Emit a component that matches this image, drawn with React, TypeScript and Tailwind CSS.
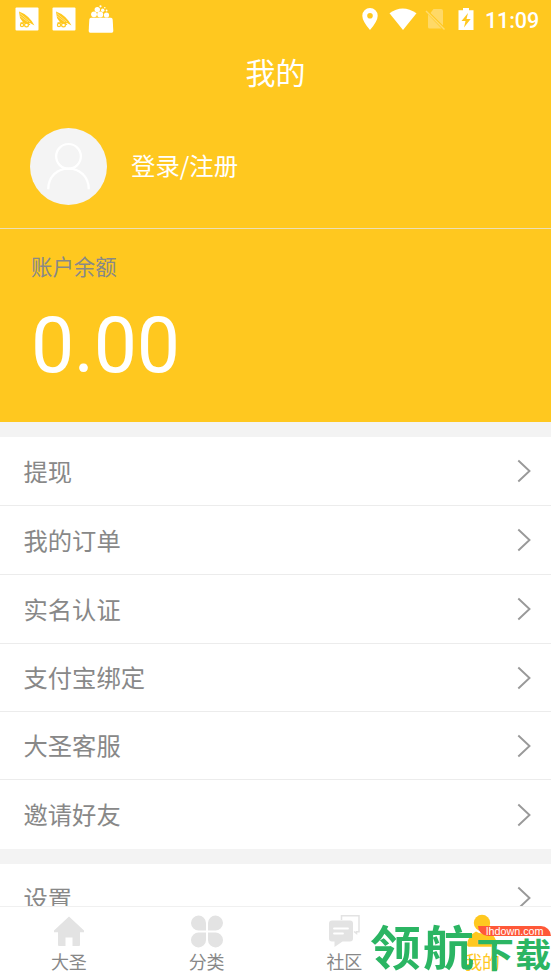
import type { ReactNode } from 'react';

type Tab = {
  name: string;
  icon: ReactNode;
  active?: boolean;
};

const menu = ['提现', '我的订单', '实名认证', '支付宝绑定', '大圣客服', '邀请好友'];

const tabs: Tab[] = [
  {
    name: '大圣',
    icon: (
      <svg width="32" height="34" viewBox="0 0 32 34" fill="#e3e3e3">
        <path d="M16 2.5 31 16.5v1.7h-4V31q0 1-1 1h-6.500v-8.500h-7V32H6q-1 0-1-1V18.200H1v-1.700z" />
      </svg>
    ),
  },
  {
    name: '分类',
    icon: (
      <svg width="32" height="34" viewBox="0 0 32 34" fill="#e3e3e3">
        <path d="M15 16.500H8A7.500 7.500 0 1 1 15 9zM17 16.500V9a7.500 7.500 0 1 1 7 7.500zM15 18.500V26a7.500 7.500 0 1 1-7-7.500zM17 18.500h7a7.500 7.500 0 1 1-7 7.500z" />
      </svg>
    ),
  },
  {
    name: '社区',
    icon: (
      <svg width="32" height="34" viewBox="0 0 32 34" fill="none">
        <path d="M13.500 6V1.800h17.500v16h-2.500v1.700l-2.500-2" stroke="#e3e3e3" strokeWidth="1.500" />
        <path d="M4 6.500h18q3 0 3 3v15q0 3-3 3h-7.500L6.500 33v-5.500H4q-3 0-3-3v-15q0-3 3-3z" fill="#e3e3e3" />
        <path d="M6 14.500h14M6 19.500h9" stroke="#fff" strokeWidth="1.800" strokeLinecap="round" />
      </svg>
    ),
  },
  {
    name: '我的',
    active: true,
    icon: (
      <svg width="32" height="34" viewBox="0 0 32 34" fill="#ffc81f">
        <circle cx="16" cy="9" r="8.200" />
        <path d="M10 17.500q6 4 12 0 8.500 4.500 9 13.500 0 1.800-2 1.800H3q-2 0-2-1.800.500-9 9-13.500z" />
      </svg>
    ),
  },
];

function AppBadge() {
  return (
    <svg width="24" height="24" viewBox="0 0 24 24">
      <rect x=".5" y=".5" width="23" height="23" rx="1" fill="#fff" />
      <path d="M4 4.500Q14 8 19.500 18.500L15 16H8.500L5 11z" fill="#ffc81f" />
      <path d="m5 9 8 6M5 6.500 15 15" stroke="#fff" strokeWidth=".4" />
      <g fill="none" stroke="#ffc81f" strokeWidth="1.200">
        <circle cx="7" cy="18" r="1.600" />
        <circle cx="11.500" cy="18" r="1.900" />
        <path d="M5.500 15.800h7l2.500 2" />
      </g>
    </svg>
  );
}

function StatusBar() {
  return (
    <div className="flex h-10 items-start justify-between pl-[15px] pr-[11px] text-white">
      <div className="flex pt-[7px]">
        <AppBadge />
        <div className="w-[13px]" />
        <AppBadge />
        <svg className="-mt-[2px] ml-[12px]" width="26" height="28" viewBox="0 0 26 28" fill="#fff">
          <path d="M3 12.800h20q1.500 0 1.700 2l.6 11.200q0 1.700-1.500 1.700H2.200q-1.500 0-1.500-1.700l.6-11.200q.2-2 1.700-2z" />
          <circle cx="6" cy="9.300" r="2.900" />
          <circle cx="12.200" cy="9.500" r="3" />
          <circle cx="18.500" cy="10" r="2.600" />
          <circle cx="9.300" cy="4.600" r="2.700" />
          <circle cx="14.700" cy="5.200" r="1.700" />
          <circle cx="12.500" cy="1.300" r="1.100" />
          <circle cx="16.800" cy="2.800" r=".8" />
          <circle cx="18.600" cy="5.500" r=".9" />
        </svg>
      </div>
      <div className="flex pt-[8px]">
        <svg width="16" height="23" viewBox="0 0 16 23">
          <path fillRule="evenodd" d="M8 0a7.700 7.700 0 0 1 7.700 7.700Q15.700 13 8 22 .3 13 .3 7.700A7.700 7.700 0 0 1 8 0zm0 5a2.800 2.800 0 1 0 0 5.600A2.800 2.800 0 0 0 8 5z" fill="#fff" />
        </svg>
        <svg className="ml-[11px]" width="28" height="23" viewBox="0 0 28 23">
          <path d="M.5 5.300Q13.500-4.500 27.500 5.300L14 22z" fill="#fff" />
        </svg>
        <svg className="ml-[8px]" width="21" height="23" viewBox="0 0 21 23">
          <path d="M8.500 1H16q2 0 2 2v14.500L5.500 5zM3 6.500 16.500 20.500H4.500q-1.500 0-1.500-1.500z" fill="#fff" opacity=".32" />
          <path d="m1 3 18.500 18.500" stroke="#fff" strokeWidth="1.500" opacity=".35" />
        </svg>
        <svg className="ml-[12px]" width="16" height="23" viewBox="0 0 16 23">
          <path fillRule="evenodd" d="M5 0h6v2.200h4.500V22H.5V2.200H5zm5 5L3.500 13H7.500l-1.500 6.500 6.700-8.500H8.500z" fill="#fff" />
        </svg>
        <span className="ml-[11px] mt-px w-[55px] whitespace-nowrap font-['Roboto',sans-serif] text-[21.5px] font-medium leading-[23px] tracking-[-0.1px]">11:09</span>
      </div>
    </div>
  );
}

function Arrow() {
  return (
    <svg width="14" height="24" viewBox="0 0 14 24" fill="none" stroke="#999" strokeWidth="1.900">
      <path d="M1.300 1.500 12.500 12 1.300 22.500" />
    </svg>
  );
}

function MenuItem({ name }: { name: string }) {
  return (
    <div className="flex h-[69px] shrink-0 items-center justify-between border-b border-[#ececec] pl-[23.5px] pr-5 last:border-0 nth-[4]:h-[68px] nth-[5]:h-[68px]">
      <span className="text-[24.3px]">{name}</span>
      <Arrow />
    </div>
  );
}

// site stamp over the tab bar
function Stamp() {
  return (
    <div className="absolute bottom-0 right-0 h-[60px] w-[182px] whitespace-nowrap font-bold text-[#2bb563]">
      <span className="absolute left-[1px] top-[3px] origin-top scale-y-92 text-[51px] leading-[51px]">领</span>
      <span className="absolute left-[54px] top-[3px] origin-top scale-y-92 text-[51px] leading-[51px]">航</span>
      <span className="absolute left-[107px] top-[17px] origin-top scale-y-92 text-[38px] leading-[38px]">下</span>
      <span className="absolute left-[146px] top-[17px] origin-top scale-y-92 text-[36px] leading-[36px]">载</span>
      <span className="absolute left-[109px] top-[7px] h-[10px] w-[73px] rounded-bl-[10px] rounded-tr-[10px] bg-[#ff5838] pl-[8px] font-['Liberation_Sans',sans-serif] text-[10.8px] font-normal leading-[10px] text-white">
        lhdown.com
      </span>
    </div>
  );
}

export default function App() {
  return (
    <div className="relative flex h-[979px] w-[551px] flex-col overflow-hidden bg-white font-['Noto_Sans_CJK_SC',sans-serif] text-[#888]">
      <header className="h-[422px] shrink-0 bg-[#ffc81f]">
        <StatusBar />
        <h1 className="h-[65px] text-center text-[30px] leading-[62px] text-white">我的</h1>
        <div className="flex h-[124px] items-center border-b border-[#eadfb8] pl-[30px]">
          <svg width="77" height="77" viewBox="0 0 76 76" fill="none">
            <circle cx="38" cy="38" r="38" fill="#f4f4f4" />
            <g stroke="#fff" strokeWidth="2.200">
              <circle cx="38" cy="28" r="12.200" />
              <path d="M18 60.500C18 48 27 40 38 40s20 8 20 20.500" />
            </g>
          </svg>
          <span className="-mt-[2px] ml-6 text-[24.4px] text-white">登录/注册</span>
        </div>
        <div className="pl-[31px] pt-[21px]">
          <p className="text-[21.4px] leading-8">账户余额</p>
          <p className="mt-[16px] font-['Roboto',sans-serif] text-[77px] leading-[96px] tracking-[-0.4px] text-white">0.00</p>
        </div>
      </header>
      <main className="flex min-h-0 flex-1 flex-col overflow-hidden">
        <div className="h-[15px] shrink-0 bg-[#f3f3f3]" />
        <div className="h-[412px] shrink-0">
          {menu.map((name) => (
            <MenuItem key={name} name={name} />
          ))}
        </div>
        <div className="h-[15px] shrink-0 bg-[#f3f3f3]" />
        <MenuItem name="设置" />
      </main>
      <nav className="flex h-[73px] shrink-0 border-t border-[#f0f0f0] bg-white">
        {tabs.map((tab) => (
          <div key={tab.name} className="flex flex-1 flex-col items-center pt-[7px]">
            {tab.icon}
            <span className={tab.active ? 'text-[18px] leading-[26px] text-[#ffc81f]' : 'text-[18px] leading-[26px]'}>{tab.name}</span>
          </div>
        ))}
      </nav>
      <Stamp />
    </div>
  );
}
